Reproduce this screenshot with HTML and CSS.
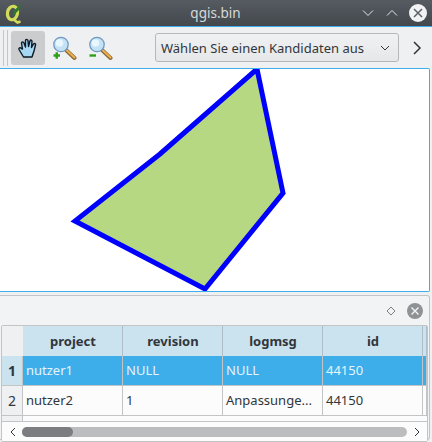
FILE: index.html
```html
<!DOCTYPE html>
<html>

<head>
    <title>qgis.bin</title>
    <meta charset="utf-8">
    <link rel="stylesheet" href="styles.css">
</head>

<body>
    <div id="titlebar">
        <svg class="logo" width="20" height="24" viewBox="0 0 20 24">
            <ellipse cx="9.500" cy="12" rx="5" ry="6.800" transform="rotate(12 9.500 12)" fill="none" stroke="#d3dc58" stroke-width="3.200"/>
            <path d="M10 18L14.500 21.500L17.500 20.500" fill="none" stroke="#d3dc58" stroke-width="2.600"/>
            <path d="M9 16L11.500 9L18.500 2.500L15.500 9.500Z" fill="#2c7a2a"/>
        </svg>
        <div class="title">qgis.bin</div>
        <div class="winbtns">
            <svg width="14" height="14" viewBox="0 0 14 14"><path d="M2 4.500L7 9.500L12 4.500" fill="none" stroke="#e4e6e8" stroke-width="1"/></svg>
            <svg width="14" height="14" viewBox="0 0 14 14"><path d="M2 9.500L7 4.500L12 9.500" fill="none" stroke="#e4e6e8" stroke-width="1"/></svg>
            <svg width="18" height="18" viewBox="0 0 18 18"><circle cx="9" cy="9" r="9" fill="#f1f2f3"/><path d="M5 5L13 13M13 5L5 13" stroke="#5b6167" stroke-width="1.500"/></svg>
        </div>
    </div>

    <div id="toolbar">
        <div class="grip"></div>
        <div class="toolbtn active">
            <svg width="24" height="24" viewBox="0 0 24 24">
                <path d="M7.500 21L3 13.500C2.500 12 4 11 5.500 12.500L6.500 13L5.500 7C5.500 5.500 7.500 5.500 8 7L9.500 11L9.500 4.500C9.500 3 11.500 3 12 4.500L12.500 10.500L14 5C14.500 3.500 16 4 16 5.500L15.500 11.500L17.500 8C18.500 7 20 7.500 19.500 9L18 15L16 21Z" fill="#a6d8f4" stroke="#0b1a26" stroke-width="1.400" stroke-linejoin="round"/>
            </svg>
        </div>
        <div class="toolbtn">
            <svg width="26" height="26" viewBox="0 0 26 26">
                <path d="M15.500 15.500L23.500 23" stroke="#8a6a3c" stroke-width="4" stroke-linecap="round"/>
                <path d="M16 15.500L23.500 22.500" stroke="#eeb04a" stroke-width="2" stroke-linecap="round"/>
                <circle cx="10" cy="9.500" r="7.200" fill="#c3e2f6" stroke="#7099c0" stroke-width="1.300"/>
                <circle cx="8.500" cy="8" r="3.800" fill="#e8f6fe"/>
                <path d="M2.500 20.500H9M5.750 17.300V23.800" stroke="#2f9e18" stroke-width="2.400"/>
            </svg>
        </div>
        <div class="toolbtn">
            <svg width="26" height="26" viewBox="0 0 26 26">
                <path d="M15.500 15.500L23.500 23" stroke="#8a6a3c" stroke-width="4" stroke-linecap="round"/>
                <path d="M16 15.500L23.500 22.500" stroke="#eeb04a" stroke-width="2" stroke-linecap="round"/>
                <circle cx="10" cy="9.500" r="7.200" fill="#c3e2f6" stroke="#7099c0" stroke-width="1.300"/>
                <circle cx="8.500" cy="8" r="3.800" fill="#e8f6fe"/>
                <path d="M2.500 20.500H9" stroke="#2f9e18" stroke-width="2.400"/>
            </svg>
        </div>
        <div class="combo">
            <span>Wählen Sie einen Kandidaten aus</span>
            <svg width="10" height="6" viewBox="0 0 10 6"><path d="M1 1L5 5L9 1" fill="none" stroke="#31363b" stroke-width="1"/></svg>
        </div>
        <svg class="more" width="12" height="16" viewBox="0 0 12 16"><path d="M3 2L9 8L3 14" fill="none" stroke="#31363b" stroke-width="1.500"/></svg>
    </div>

    <div id="canvas">
        <svg width="428" height="222" viewBox="0 69 428 222">
            <path d="M257 69L283 193L205 289L75 221L160 154Z" fill="#b7d882" stroke="#0000ff" stroke-width="5" stroke-linejoin="miter"/>
        </svg>
    </div>

    <div id="panel">
        <div class="panelhead">
            <svg width="10" height="10" viewBox="0 0 10 10"><path d="M5 1L9 5L5 9L1 5Z" fill="none" stroke="#5b6167" stroke-width="0.800"/></svg>
            <svg width="16" height="16" viewBox="0 0 16 16"><circle cx="8" cy="8" r="8" fill="#8f9295"/><path d="M4.500 4.500L11.500 11.500M11.500 4.500L4.500 11.500" stroke="#f2f3f5" stroke-width="1.400"/></svg>
        </div>
        <div class="tablebox">
            <div class="grid">
                <div class="corner"></div>
                <div class="colhead">project</div>
                <div class="colhead">revision</div>
                <div class="colhead">logmsg</div>
                <div class="colhead">id</div>
                <div class="colhead"></div>

                <div class="rowhead sel">1</div>
                <div class="cell sel">nutzer1</div>
                <div class="cell sel">NULL</div>
                <div class="cell sel">NULL</div>
                <div class="cell sel">44150</div>
                <div class="cell sel"></div>

                <div class="rowhead">2</div>
                <div class="cell">nutzer2</div>
                <div class="cell">1</div>
                <div class="cell">Anpassunge...</div>
                <div class="cell">44150</div>
                <div class="cell"></div>
            </div>
            <div class="rest"><div class="reststub"></div></div>
            <div class="hscroll">
                <svg width="8" height="10" viewBox="0 0 8 10"><path d="M6 1L2 5L6 9" fill="none" stroke="#31363b" stroke-width="1"/></svg>
                <div class="track"><div class="thumb"></div></div>
                <svg width="8" height="10" viewBox="0 0 8 10"><path d="M2 1L6 5L2 9" fill="none" stroke="#31363b" stroke-width="1"/></svg>
            </div>
        </div>
    </div>
</body>

</html>
```
FILE: styles.css
```css
body {
    margin: 0;
    width: 432px;
    height: 442px;
    overflow: hidden;
    background-color: #eff0f1;
    font-family: "Noto Sans", sans-serif;
    font-size: 13px;
    color: #31363b;
}

#titlebar {
    height: 26px;
    display: flex;
    align-items: center;
    background: linear-gradient(#555b61, #43484d);
    border-bottom: 1px solid #3daee9;
}

.logo {
    margin-left: 3px;
}

.title {
    flex: 1;
    text-align: center;
    color: #d6d9db;
    font-size: 13.500px;
    padding-left: 47px;
}

.winbtns {
    display: flex;
    align-items: center;
    gap: 10px;
    margin-right: 5px;
}

#toolbar {
    height: 41px;
    display: flex;
    align-items: center;
    background-color: #eff0f1;
}

.grip {
    width: 3px;
    height: 36px;
    margin-left: 3px;
    border-left: 1px solid #c4c6c8;
    border-right: 1px solid #c4c6c8;
}

.toolbtn {
    width: 34px;
    height: 34px;
    margin-left: 2px;
    display: flex;
    align-items: center;
    justify-content: center;
}

.toolbtn.active {
    margin-left: 3px;
    background-color: #cbcccd;
    border-radius: 3px;
}

.combo {
    width: 244px;
    height: 29px;
    margin-left: 38px;
    padding: 0 8px 0 5px;
    box-sizing: border-box;
    display: flex;
    align-items: center;
    justify-content: space-between;
    background: linear-gradient(#f0f1f2, #e6e7e9);
    border: 1px solid #b5b7b9;
    border-radius: 3px;
}

.more {
    margin-left: 12px;
}

#canvas {
    width: 430px;
    height: 224px;
    box-sizing: border-box;
    background-color: white;
    border: 1px solid #3daee9;
    border-left: 0;
    border-radius: 0 2px 2px 0;
}

#canvas svg {
    display: block;
}

#panel {
    width: 430px;
    height: 145px;
    margin-top: 3px;
    box-sizing: border-box;
    background-color: #f2f3f5;
    border: 1px solid #c2c4c6;
    border-left: 0;
    border-radius: 0 3px 3px 0;
    padding-left: 1px;
}

.panelhead {
    height: 29px;
    display: flex;
    align-items: center;
    justify-content: flex-end;
    gap: 11px;
    padding-right: 6px;
}

.tablebox {
    width: 427px;
    box-sizing: border-box;
    border: 1px solid #c2c4c6;
    border-radius: 2px;
    background-color: #fcfcfc;
}

.grid {
    display: grid;
    grid-template-columns: 21px 100px 100px 100px 100px 4px;
    grid-template-rows: 30px 30px 30px;
}

.corner {
    background-color: #eff0f1;
}

.colhead {
    display: flex;
    align-items: center;
    justify-content: center;
    padding-left: 1px;
    background-color: #cbe2ef;
    border-right: 1px solid #aebdc8;
    font-weight: bold;
}

.rowhead {
    display: flex;
    align-items: center;
    justify-content: center;
    background-color: #eff0f1;
    border-right: 1px solid #c2c4c6;
    border-bottom: 1px solid #c2c4c6;
    font-size: 14px;
}

.rowhead.sel {
    background-color: #cbe2ef;
    font-weight: bold;
}

.cell {
    display: flex;
    align-items: center;
    padding-left: 3px;
    padding-bottom: 1px;
    background-color: #fcfcfc;
    border-right: 1px solid #c2c4c6;
    border-bottom: 1px solid #c2c4c6;
    white-space: nowrap;
}

.cell.sel {
    background-color: #3daee9;
    color: #e6f4fc;
}

.rest {
    height: 5px;
}

.reststub {
    width: 21px;
    height: 5px;
    background-color: #eff0f1;
    border-right: 1px solid #c2c4c6;
    box-sizing: border-box;
}

.hscroll {
    height: 19px;
    display: flex;
    align-items: center;
    gap: 5px;
    padding: 0 5px 0 7px;
    background-color: #fcfcfc;
    border-top: 1px solid #c2c4c6;
}

.track {
    width: 385px;
    height: 10px;
    margin-right: 1px;
    border-radius: 5px;
    background-color: #bcbdbe;
}

.thumb {
    width: 51px;
    height: 10px;
    border-radius: 5px;
    background-color: #7c7d81;
}
```
